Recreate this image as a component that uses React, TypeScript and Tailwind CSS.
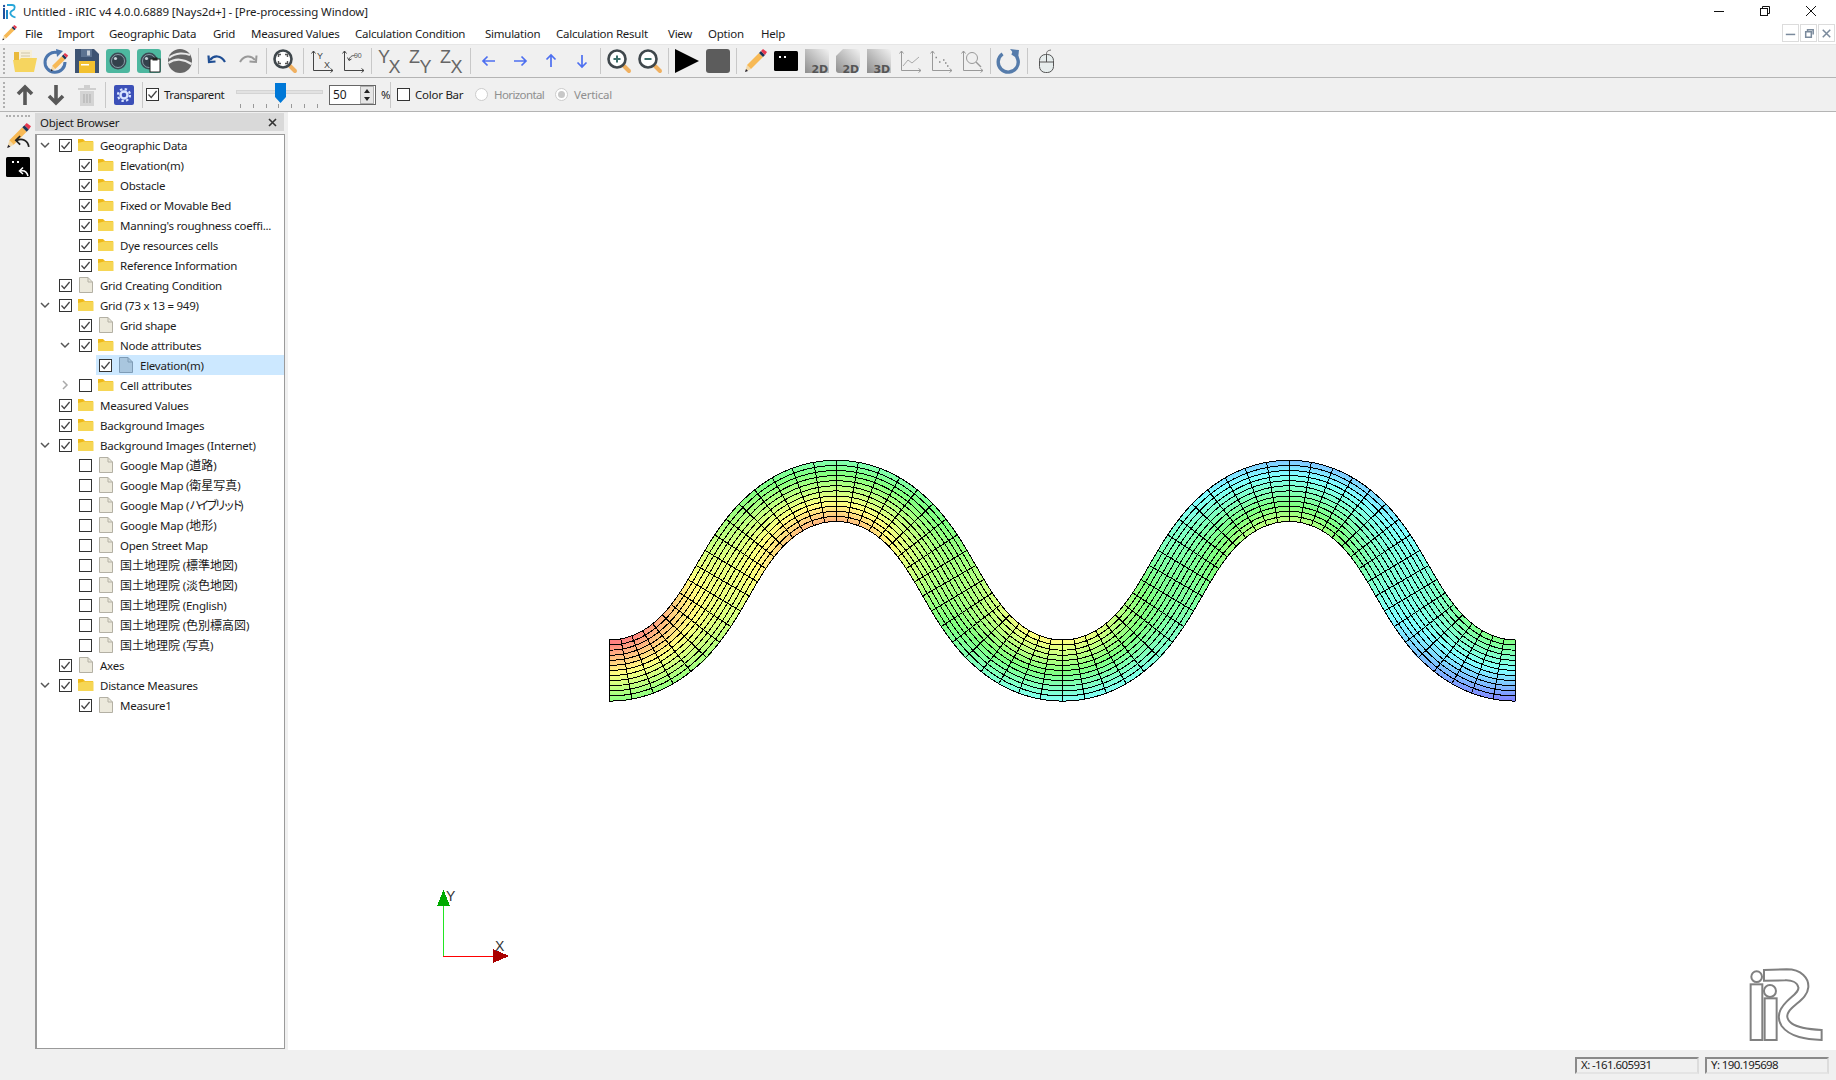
import React, { useMemo } from "react";

const FONT = "font-['Noto_Sans','Noto_Sans_CJK_JP',sans-serif]";

/* ---------- mesh ---------- */
function hsvToWhiteBlend(v: number) {
  const c = Math.max(0, Math.min(1, v));
  const h = 240 * (1 - c);
  const x = 1 - Math.abs(((h / 60) % 2) - 1);
  let r = 0, g = 0, b = 0;
  if (h < 60) [r, g, b] = [1, x, 0];
  else if (h < 120) [r, g, b] = [x, 1, 0];
  else if (h < 180) [r, g, b] = [0, 1, x];
  else [r, g, b] = [0, x, 1];
  const m = (q: number) => Math.round(127.5 + 127.5 * q);
  return `rgb(${m(r)},${m(g)},${m(b)})`;
}

function halfWave(tm: number) {
  let dx = 0, dy = 0;
  const n = 2000;
  for (let k = 0; k < n; k++) {
    const th = tm * Math.sin((Math.PI * (k + 0.5)) / n);
    dx += Math.cos(th) / n;
    dy += Math.sin(th) / n;
  }
  return { dx, dy };
}

function buildMesh() {
  const X0 = 609.5, Y0 = 670.5, HX = 226.5, HY = 179.6, HALF_W = 30.6;
  let lo = 0.1, hi = 1.5;
  for (let k = 0; k < 50; k++) {
    const mid = (lo + hi) / 2;
    const w = halfWave(mid);
    if (w.dy / w.dx < HY / HX) lo = mid;
    else hi = mid;
  }
  const tm = (lo + hi) / 2;
  const halfL = HX / halfWave(tm).dx;
  const SUBI = 3, SUBJ = 2, CI = 72, CJ = 12;
  const ni = CI * SUBI;
  const total = halfL * 4;
  const ds = total / ni;
  const cx: number[] = [], cy: number[] = [], ang: number[] = [];
  let px = X0, py = Y0;
  for (let i = 0; i <= ni; i++) {
    const s = i * ds;
    const th = tm * Math.sin((Math.PI * s) / halfL);
    cx.push(px); cy.push(py); ang.push(th);
    const steps = 20;
    for (let q = 0; q < steps; q++) {
      const sm = s + ((q + 0.5) * ds) / steps;
      const t2 = tm * Math.sin((Math.PI * sm) / halfL);
      px += (Math.cos(t2) * ds) / steps;
      py -= (Math.sin(t2) * ds) / steps;
    }
  }
  const pt = (i: number, j: number): [number, number] => {
    const n = HALF_W * (1 - j / (CJ * SUBJ / 2));
    return [cx[i] - Math.sin(ang[i]) * n, cy[i] - Math.cos(ang[i]) * n];
  };
  const val = (i: number, j: number) => {
    const t = i / ni;
    const n = 1 - j / (CJ * SUBJ / 2);
    return 0.78 - 0.53 * t + 0.25 * n * Math.cos((Math.PI * i * ds) / halfL);
  };
  const polys: { p: string; c: string }[] = [];
  for (let i = 0; i < ni; i++) {
    for (let j = 0; j < CJ * SUBJ; j++) {
      const a = pt(i, j), b = pt(i + 1, j), c = pt(i + 1, j + 1), d = pt(i, j + 1);
      polys.push({
        p: [a, b, c, d].map((q) => `${q[0].toFixed(1)},${q[1].toFixed(1)}`).join(" "),
        c: hsvToWhiteBlend(val(i + 0.5, j + 0.5)),
      });
    }
  }
  let lines = "";
  for (let i = 0; i <= CI; i++) {
    const a = pt(i * SUBI, 0), b = pt(i * SUBI, CJ * SUBJ);
    lines += `M${a[0].toFixed(1)} ${a[1].toFixed(1)}L${b[0].toFixed(1)} ${b[1].toFixed(1)}`;
  }
  for (let j = 0; j <= CJ; j++) {
    for (let i = 0; i <= ni; i++) {
      const a = pt(i, j * SUBJ);
      lines += `${i === 0 ? "M" : "L"}${a[0].toFixed(1)} ${a[1].toFixed(1)}`;
    }
  }
  return { polys, lines };
}

function Canvas() {
  const mesh = useMemo(buildMesh, []);
  return (
    <svg className="block" width={1548} height={938} viewBox="288 112 1548 938">
      <g shapeRendering="crispEdges">
        {mesh.polys.map((q, i) => (
          <polygon key={i} points={q.p} fill={q.c} stroke={q.c} strokeWidth={0.6} />
        ))}
        <path d={mesh.lines} fill="none" stroke="#000" strokeWidth={1} />
      </g>
      <g shapeRendering="crispEdges">
        <line x1={443.5} y1={906} x2={443.5} y2={956} stroke="#22e622" />
        <line x1={443} y1={956.5} x2={494} y2={956.5} stroke="#ff0000" />
        <polygon points="443.5,890 450,906 437,906" fill="#00aa00" />
        <polygon points="509,956 493,949 493,963" fill="#aa0000" />
      </g>
      <text x={446} y={901} fontSize={14} fill="#333" fontFamily="'Liberation Sans',sans-serif">Y</text>
      <text x={495} y={951} fontSize={14} fill="#333" fontFamily="'Liberation Sans',sans-serif">X</text>
      <g transform="translate(1560 950) scale(0.3333)" fill="#fff" stroke="#808080" strokeWidth={6}>
        <rect x={572} y={103} width={35} height={167} />
        <circle cx={590} cy={80} r={16} />
        <rect x={614} y={145} width={36} height={125} />
        <circle cx={630} cy={123} r={18} />
        <path d="M612 60 L680 58 C725 58 747 85 745 112 C743 140 715 155 695 175 C680 190 675 205 695 220 C715 235 750 238 785 240 L785 270 C740 268 690 262 665 228 C650 205 655 180 680 155 C700 135 718 125 715 112 C712 97 695 90 675 91 L612 92 Z" />
      </g>
    </svg>
  );
}

/* ---------- toolbar icons ---------- */
const I = ({ children }: { children: React.ReactNode }) => (
  <svg className="block shrink-0 overflow-visible" width={24} height={24} viewBox="0 0 24 24">{children}</svg>
);
const Pencil = () => (
  <g>
    <polygon points="2,23 4,16 8,20" fill="#f3d9a8" />
    <polygon points="2,23 3,20 5,22" fill="#223" />
    <polygon points="4,16 16,4 20,8 8,20" fill="#f7b955" />
    <polygon points="16,4 18,2 22,6 20,8" fill="#1d3557" />
    <polygon points="18,2 20,0 24,3 22,6" fill="#e63950" />
  </g>
);
const OpenFolder = () => (
  <I>
    <path d="M1 3h7l2 2h8v8H1z" fill="#e9b93c" />
    <rect x={6} y={1} width={13} height={13} fill="#f6efd9" />
    <path d="M8 4h9M8 7h9M8 10h9" stroke="#cfc6a8" />
    <path d="M0 11h6l2-2h16l-3 14H2z" fill="#f6d55f" />
  </I>
);
const RefreshPencil = () => (
  <I>
    <path d="M13 3.5A10 10 0 1 0 21 13" fill="none" stroke="#4c76ad" strokeWidth={3} />
    <polygon points="12,0 19,2 13,8" fill="#4c76ad" />
    <g transform="translate(5 4) scale(0.8)"><Pencil /></g>
  </I>
);
const Save = () => (
  <I>
    <path d="M0 0h19l5 5v19H0z" fill="#3d5372" />
    <rect x={6} y={0} width={11} height={8} fill="#5c7391" />
    <rect x={12} y={1.5} width={3} height={5} fill="#c7d0da" />
    <rect x={4} y={12} width={16} height={12} fill="#f3c130" />
    <rect x={6} y={15} width={8} height={1.5} fill="#fff" />
  </I>
);
const Lens = () => (
  <g>
    <circle cx={12} cy={12} r={8.5} fill="#3c4b56" />
    <circle cx={12} cy={12} r={6.5} fill="#33414c" stroke="#9fb3bd" strokeWidth={0.8} />
    <circle cx={9.5} cy={9.5} r={1.6} fill="#c8d4da" />
  </g>
);
const Camera = () => (
  <I>
    <rect width={24} height={24} rx={3} fill="#4db79f" />
    <Lens />
  </I>
);
const CameraDoc = () => (
  <I>
    <rect width={24} height={24} rx={3} fill="#4db79f" />
    <Lens />
    <rect x={13} y={10} width={10} height={13} fill="#fff" stroke="#222" />
    <rect x={15.5} y={8.5} width={5} height={3} fill="#222" />
  </I>
);
const Earth = () => (
  <I>
    <circle cx={12} cy={12} r={12} fill="#666" />
    <path d="M1 9C8 3 17 4 22 6" fill="none" stroke="#e8e8e8" strokeWidth={2} />
    <path d="M0.5 14C7 9 16 10 23.5 15" fill="none" stroke="#e8e8e8" strokeWidth={2.2} />
  </I>
);
const Undo = ({ c }: { c: string }) => (
  <I>
    <path d="M5 11C9 6 16 6 20 13" fill="none" stroke={c} strokeWidth={2.2} />
    <path d="M3.5 6.5L4 13L10.5 12.5" fill="none" stroke={c} strokeWidth={2.2} />
  </I>
);
const Redo = () => (
  <I>
    <g transform="translate(24 0) scale(-1 1)">
      <path d="M5 11C9 6 16 6 20 13" fill="none" stroke="#999" strokeWidth={2} />
      <path d="M3.5 6.5L4 13L10.5 12.5" fill="none" stroke="#999" strokeWidth={2} />
    </g>
  </I>
);
const Mag = ({ children }: { children: React.ReactNode }) => (
  <I>
    <path d="M15 15L22 22" stroke="#f0b060" strokeWidth={4} strokeLinecap="round" />
    <circle cx={10} cy={10} r={8.5} fill="#fff" stroke="#3f474c" strokeWidth={2.6} />
    {children}
  </I>
);
const AxisBase = () => (
  <g fill="none" stroke="#444" strokeWidth={1}>
    <path d="M3.5 2V21.5H23" />
    <path d="M1.5 4.5L3.5 2L5.5 4.5M20.5 19.5L23 21.5L20.5 23.5" />
  </g>
);
const AxisYX = () => (
  <I>
    <AxisBase />
    <text x={7} y={9.5} fontSize={9} fill="#444" fontFamily="'Liberation Sans',sans-serif">Y</text>
    <text x={14} y={19} fontSize={9} fill="#444" fontFamily="'Liberation Sans',sans-serif">X</text>
  </I>
);
const Axis90 = () => (
  <I>
    <AxisBase />
    <path d="M8 11C9 7 12 6 14 7" fill="none" stroke="#444" />
    <path d="M6.5 8.5L8 11.5L10.5 10" fill="none" stroke="#444" />
    <text x={13} y={8.5} fontSize={7} fill="#555" fontFamily="'Liberation Sans',sans-serif">90</text>
  </I>
);
const Letters = ({ a, b }: { a: string; b: string }) => (
  <I>
    <text x={0} y={13.5} fontSize={18} fill="#666" fontFamily="'Liberation Sans',sans-serif">{a}</text>
    <text x={10.5} y={23.5} fontSize={18} fill="#666" fontFamily="'Liberation Sans',sans-serif">{b}</text>
  </I>
);
const Arrow = ({ rot }: { rot: number }) => (
  <I>
    <g transform={`rotate(${rot} 12 12)`}>
      <path d="M12 18V6M7.5 10.5L12 6L16.5 10.5" fill="none" stroke="#4d6ff0" strokeWidth={1.7} />
    </g>
  </I>
);
const ZoomPM = ({ plus }: { plus: boolean }) => (
  <Mag>
    <path d={plus ? "M6.5 10h7M10 6.5v7" : "M6.5 10h7"} stroke="#3b6e6a" strokeWidth={2} />
  </Mag>
);
const Fit = () => (
  <Mag>
    <path d="M5.5 8V5.5H8M12 5.5h2.5V8M14.5 12v2.5H12M8 14.5H5.5V12" fill="none" stroke="#555" strokeWidth={1.4} />
  </Mag>
);
const Console = () => (
  <I>
    <rect x={0} y={2} width={24} height={20} rx={1.5} fill="#000" />
    <rect x={5} y={7} width={2} height={2} fill="#fff" />
    <rect x={10} y={7} width={2} height={2} fill="#fff" />
  </I>
);
const Dim = ({ label, id, folded }: { label: string; id: string; folded?: boolean }) => (
  <I>
    <defs>
      <linearGradient id={id} x1="0" y1="1" x2="1" y2="0">
        <stop offset="0" stopColor="#8d8d8d" />
        <stop offset="1" stopColor="#f2f2f2" />
      </linearGradient>
    </defs>
    {folded ? <path d="M7 0H24V18L18 24H3Q0 24 0 21V7z" fill={`url(#${id})`} /> : <rect width={24} height={24} fill={`url(#${id})`} />}
    <text x={6.5} y={23.5} fontSize={11} fontWeight={700} fill="#555" fontFamily="'DejaVu Sans',sans-serif">{label}</text>
  </I>
);
const GraphBase = () => (
  <g fill="none" stroke="#999">
    <path d="M3.5 2V21.5H23M1.5 4.5L3.5 2L5.5 4.5M20.5 19.5L23 21.5L20.5 23.5" />
  </g>
);
const Graph = () => (
  <I><GraphBase /><path d="M5 17L10 11L14 14L21 8" fill="none" stroke="#aaa" /></I>
);
const Scatter = () => (
  <I>
    <GraphBase />
    <path d="M6.5 8.5h1.5M10 13h1.5M14 11h1.5M16 14h1.5M18 17h1.5" stroke="#888" strokeWidth={1.5} />
  </I>
);
const GraphZoom = () => (
  <I>
    <GraphBase />
    <circle cx={12} cy={9} r={5.5} fill="none" stroke="#999" />
    <path d="M16 13L21 18" stroke="#999" strokeWidth={1.4} />
  </I>
);
const Refresh = () => (
  <I>
    <path d="M15.5 4A10 10 0 1 1 6 4.5" fill="none" stroke="#567cab" strokeWidth={3.4} transform="rotate(-3 12 13)" />
    <polygon points="13,0 22,1 21,10" fill="#567cab" />
  </I>
);
const Mouse = () => (
  <I>
    <rect x={5.5} y={5.5} width={14} height={18} rx={6} fill="#e6eded" stroke="#555" />
    <path d="M5.5 13H19.5M12.5 6V13" stroke="#555" fill="none" />
    <path d="M12.5 5C12.5 2 14 1.5 17 1" stroke="#777" fill="none" />
  </I>
);
const Sep = () => <div className="w-px h-[26px] -mx-px bg-[#c8c8c8] shrink-0" />;
const Grip = () => <div className="w-[2px] h-[26px] border-l-2 border-dotted border-[#b0b0b0] mr-[8px] shrink-0" />;

/* ---------- small widgets ---------- */
const Check = ({ on }: { on: boolean }) => (
  <svg className="block shrink-0" width={13} height={13} viewBox="0 0 13 13">
    <rect x={0.5} y={0.5} width={12} height={12} fill="#fff" stroke="#333" />
    {on && <path d="M2.5 6.5L5.2 9.4L10.6 3" fill="none" stroke="#444" strokeWidth={1.3} />}
  </svg>
);
const Folder = () => (
  <svg className="block shrink-0" width={16} height={16} viewBox="0 0 16 16">
    <path d="M0 2h5l2 2h8v3H0z" fill="#f0b917" />
    <path d="M0 6l6-1.5h9.5V14H0z" fill="#f6d655" />
  </svg>
);
const Doc = ({ sel }: { sel?: boolean }) => (
  <svg className="block shrink-0" width={16} height={16} viewBox="0 0 16 16">
    <path
      d="M1.5 0.5H10L14.5 5V15.5H1.5z"
      fill={sel ? "#a9c6de" : "#ece9dc"}
      stroke={sel ? "#7f9cb6" : "#b3b0a4"}
    />
    <path d="M10 0.5V5H14.5" fill="none" stroke={sel ? "#7f9cb6" : "#b3b0a4"} />
  </svg>
);
const Chevron = ({ open }: { open: boolean }) => (
  <svg className="block ml-[3px]" width={10} height={10} viewBox="0 0 10 10">
    <path d={open ? "M1 3L5 7L9 3" : "M3 1L7 5L3 9"} fill="none" stroke={open ? "#555" : "#aaa"} strokeWidth={1.5} />
  </svg>
);

/* CJK runs are a size up and katakana is set narrow, as in the reference */
const Label = ({ t }: { t: string }) => (
  <span className="ml-[6px] pt-px whitespace-nowrap tracking-[-0.25px]">
    {t.split(/([\u30a0-\u30ff]+|[\u4e00-\u9fff]+)/).map((p, i) =>
      /[\u30a0-\u30ff]/.test(p) ? (
        <span key={i} className="text-[12px] tracking-[-3.5px]">{p}</span>
      ) : /[\u4e00-\u9fff]/.test(p) ? (
        <span key={i} className="text-[12px] tracking-normal">{p}</span>
      ) : (
        <span key={i}>{p}</span>
      )
    )}
  </span>
);

type Row = { l: number; t: string; k: "f" | "d"; c: boolean; ch?: "o" | "c"; sel?: boolean };
const rows: Row[] = [
  { l: 0, t: "Geographic Data", k: "f", c: true, ch: "o" },
  { l: 1, t: "Elevation(m)", k: "f", c: true },
  { l: 1, t: "Obstacle", k: "f", c: true },
  { l: 1, t: "Fixed or Movable Bed", k: "f", c: true },
  { l: 1, t: "Manning's roughness coeffi...", k: "f", c: true },
  { l: 1, t: "Dye resources cells", k: "f", c: true },
  { l: 1, t: "Reference Information", k: "f", c: true },
  { l: 0, t: "Grid Creating Condition", k: "d", c: true },
  { l: 0, t: "Grid (73 x 13 = 949)", k: "f", c: true, ch: "o" },
  { l: 1, t: "Grid shape", k: "d", c: true },
  { l: 1, t: "Node attributes", k: "f", c: true, ch: "o" },
  { l: 2, t: "Elevation(m)", k: "d", c: true, sel: true },
  { l: 1, t: "Cell attributes", k: "f", c: false, ch: "c" },
  { l: 0, t: "Measured Values", k: "f", c: true },
  { l: 0, t: "Background Images", k: "f", c: true },
  { l: 0, t: "Background Images (Internet)", k: "f", c: true, ch: "o" },
  { l: 1, t: "Google Map (道路)", k: "d", c: false },
  { l: 1, t: "Google Map (衛星写真)", k: "d", c: false },
  { l: 1, t: "Google Map (ハイブリッド)", k: "d", c: false },
  { l: 1, t: "Google Map (地形)", k: "d", c: false },
  { l: 1, t: "Open Street Map", k: "d", c: false },
  { l: 1, t: "国土地理院 (標準地図)", k: "d", c: false },
  { l: 1, t: "国土地理院 (淡色地図)", k: "d", c: false },
  { l: 1, t: "国土地理院 (English)", k: "d", c: false },
  { l: 1, t: "国土地理院 (色別標高図)", k: "d", c: false },
  { l: 1, t: "国土地理院 (写真)", k: "d", c: false },
  { l: 0, t: "Axes", k: "d", c: true },
  { l: 0, t: "Distance Measures", k: "f", c: true, ch: "o" },
  { l: 1, t: "Measure1", k: "d", c: true },
];

const TreeRow = ({ r }: { r: Row }) => {
  const content = (
    <>
      <Check on={r.c} />
      <div className="ml-[6px]">{r.k === "f" ? <Folder /> : <Doc sel={r.sel} />}</div>
      <Label t={r.t} />
    </>
  );
  const pad = r.l === 0 ? "pl-0" : r.l === 1 ? "pl-[20px]" : "pl-[40px]";
  if (r.sel) {
    return (
      <div className={`h-5 flex items-center ${pad}`}>
        <div className="w-[19px] shrink-0" />
        <div className="h-5 flex-1 flex items-center pl-[3px] bg-[#cce8ff]">{content}</div>
      </div>
    );
  }
  return (
    <div className={`h-5 flex items-center ${pad}`}>
      <div className="w-[22px] shrink-0">{r.ch && <Chevron open={r.ch === "o"} />}</div>
      {content}
    </div>
  );
};

const menus: [string, string][] = [
  ["File", "w-[33px]"],
  ["Import", "w-[51px]"],
  ["Geographic Data", "w-[104px]"],
  ["Grid", "w-[38px]"],
  ["Measured Values", "w-[104px]"],
  ["Calculation Condition", "w-[130px]"],
  ["Simulation", "w-[71px]"],
  ["Calculation Result", "w-[112px]"],
  ["View", "w-[40px]"],
  ["Option", "w-[53px]"],
  ["Help", "w-[40px]"],
];

const Ticks = () => (
  <div className="flex justify-between w-[78px] ml-[4px]">
    {[0, 1, 2, 3, 4, 5, 6].map((i) => (
      <div key={i} className="w-px h-[4px] bg-[#999]" />
    ))}
  </div>
);

export default function App() {
  return (
    <div className={`w-[1836px] h-[1080px] flex flex-col overflow-hidden bg-white text-[11.5px] tracking-[-0.25px] text-[#1c1c1c] ${FONT}`}>
      {/* title bar */}
      <div className="h-[22px] flex items-center shrink-0 relative">
        <svg className="ml-[3px] mr-[7px] block" width={13} height={15} viewBox="0 0 13 15">
          <rect x={0} y={4} width={2} height={11} fill="#1e4f9c" />
          <circle cx={1} cy={2} r={1.2} fill="#1e4f9c" />
          <rect x={3} y={6} width={2} height={9} fill="#1e88c7" />
          <path d="M4 1H9C12.5 1 12.5 5 9.5 6.5C6.5 8 6 11.5 12.5 13.5" fill="none" stroke="#27a6d9" strokeWidth={1.8} />
        </svg>
        <span className="pt-[2px] tracking-[-0.07px]">Untitled - iRIC v4 4.0.0.6889 [Nays2d+] - [Pre-processing Window]</span>
        <div className="ml-auto flex items-center text-black">
          <svg className="block mr-[36px]" width={10} height={10} viewBox="0 0 10 10"><path d="M0 5.5H10" stroke="#111" /></svg>
          <svg className="block mr-[36px]" width={10} height={10} viewBox="0 0 10 10">
            <rect x={0.5} y={2.5} width={7} height={7} fill="none" stroke="#111" />
            <path d="M2.5 2.5V0.5H9.5V7.5H7.5" fill="none" stroke="#111" />
          </svg>
          <svg className="block mr-[20px]" width={10} height={10} viewBox="0 0 10 10"><path d="M0 0L10 10M10 0L0 10" stroke="#111" /></svg>
        </div>
      </div>
      {/* menu bar */}
      <div className="h-[22px] flex items-center shrink-0 relative">
        <svg className="block ml-[1px] mr-[8px]" width={16} height={16} viewBox="0 0 24 24"><Pencil /></svg>
        {menus.map(([m, w]) => (
          <div key={m} className={`${w} pt-px whitespace-nowrap`}>{m}</div>
        ))}
        <div className="ml-auto mr-px flex gap-px">
          {["M3 9h10", "M5 6h6v6H5zM7 6V4h6v5", "M4 4L12 12M12 4L4 12"].map((d) => (
            <div key={d} className="w-[17px] h-[18px] border border-[#dcdcdc] flex items-center justify-center">
              <svg className="block" width={15} height={15} viewBox="0 0 16 16">
                <path d={d} fill="none" stroke="#7a8a9c" strokeWidth={d.length > 20 && d[1] === "4" ? 2.4 : 1.6} />
              </svg>
            </div>
          ))}
        </div>
      </div>
      {/* toolbar 1 */}
      <div className="h-[34px] bg-[#f0f0f0] border-y border-t-[#e6e6e6] border-b-[#b4b4b4] flex items-center pl-[3px] gap-[7px] shrink-0">
        <div className="-mr-[7px]"><Grip /></div>
        <OpenFolder /><RefreshPencil /><Save /><Camera /><CameraDoc /><Earth />
        <Sep />
        <Undo c="#1f4e94" /><Redo />
        <Sep />
        <Fit />
        <Sep />
        <AxisYX /><Axis90 />
        <Sep />
        <Letters a="Y" b="X" /><Letters a="Z" b="Y" /><Letters a="Z" b="X" />
        <Sep />
        <Arrow rot={-90} /><Arrow rot={90} /><Arrow rot={0} /><Arrow rot={180} />
        <Sep />
        <ZoomPM plus /><ZoomPM plus={false} />
        <Sep />
        <I><polygon points="0,0 24,12 0,24" fill="#000" /></I>
        <I><rect width={24} height={24} rx={3} fill="#5c5c5c" /></I>
        <Sep />
        <I><Pencil /></I>
        <Console />
        <Dim id="d1" label="2D" />
        <Dim id="d2" label="2D" folded />
        <Dim id="d3" label="3D" />
        <Graph /><Scatter /><GraphZoom />
        <Sep />
        <Refresh />
        <Sep />
        <Mouse />
      </div>
      {/* toolbar 2 */}
      <div className="h-[34px] bg-[#f0f0f0] border-b border-[#b4b4b4] flex items-center pl-[3px] shrink-0">
        <Grip />
        <div className="flex items-center gap-[7px]">
          <I><path d="M12 22V4M5 11L12 4L19 11" fill="none" stroke="#585858" strokeWidth={3.6} /></I>
          <I><path d="M12 2V20M5 13L12 20L19 13" fill="none" stroke="#585858" strokeWidth={3.6} /></I>
          <I>
            <path d="M3 5H21V7H3zM9 2H15V5H9z" fill="#cfcfcf" />
            <path d="M5 8H19V23H5z" fill="#d4d4d4" />
            <path d="M9 11V20M12 11V20M15 11V20" stroke="#b5b5b5" strokeWidth={1.3} />
          </I>
          <Sep />
          <I>
            <rect x={2} y={2} width={20} height={20} rx={2} fill="#3c50b8" />
            <circle cx={12} cy={12} r={3.5} fill="none" stroke="#d8e4ff" strokeWidth={2.4} />
            <circle cx={12} cy={12} r={6} fill="none" stroke="#d8e4ff" strokeWidth={2.2} strokeDasharray="2.4 2.3" />
          </I>
          <Sep />
        </div>
        <div className="ml-[4px]"><Check on /></div>
        <span className="ml-[5px] w-[72px] whitespace-nowrap tracking-[-0.45px]">Transparent</span>
        <div className="relative w-[87px] h-[28px] flex flex-col justify-end">
          <div className="absolute left-0 right-0 top-[9px] h-[4px] bg-[#e2e2e2] border border-[#d4d4d4]" />
          <svg className="absolute left-[39px] top-[2px] block" width={11} height={20} viewBox="0 0 11 20">
            <path d="M0 0H11V14L5.5 20L0 14z" fill="#0078d7" />
          </svg>
          <div className="mb-px"><Ticks /></div>
        </div>
        <div className="ml-[6px] w-[47px] h-[20px] bg-white border border-[#666] flex items-center pl-[3px] pr-px">
          <span className="flex-1 text-[12px] tracking-normal">50</span>
          <div className="w-[14px] h-[18px] flex flex-col bg-[#e6e6e6] border border-[#b0b0b0]">
            <svg className="block flex-1" viewBox="0 0 12 8"><path d="M3 6L6 2L9 6z" fill="#222" /></svg>
            <svg className="block flex-1" viewBox="0 0 12 8"><path d="M3 2L6 6L9 2z" fill="#222" /></svg>
          </div>
        </div>
        <span className="ml-[5px] w-[9px]">%</span>
        <div className="w-px h-[26px] bg-[#c8c8c8] ml-0" />
        <div className="ml-[6px]"><Check on={false} /></div>
        <span className="ml-[5px] w-[60px] whitespace-nowrap">Color Bar</span>
        <div className="w-[13px] h-[13px] rounded-full bg-white border border-[#cccccc]" />
        <span className="ml-[6px] w-[61px] whitespace-nowrap tracking-[-0.6px] text-[#8f8f8f]">Horizontal</span>
        <div className="w-[13px] h-[13px] rounded-full bg-white border border-[#cccccc] flex items-center justify-center">
          <div className="w-[7px] h-[7px] rounded-full bg-[#c8c8c8]" />
        </div>
        <span className="ml-[6px] whitespace-nowrap text-[#8f8f8f]">Vertical</span>
      </div>
      {/* main */}
      <div className="flex-1 min-h-0 flex">
        <div className="w-[35px] bg-[#f0f0f0] shrink-0 flex flex-col items-center pt-[3px]">
          <div className="w-[24px] h-[2px] border-t-2 border-dotted border-[#b0b0b0]" />
          <svg className="block mt-[6px]" width={26} height={26} viewBox="0 0 24 24">
            <Pencil />
            <path d="M22 22C21 16 16 14 11 16" fill="none" stroke="#222" strokeWidth={1.6} />
            <path d="M14 12L10 16L14 20" fill="none" stroke="#222" strokeWidth={1.6} />
          </svg>
          <svg className="block mt-[8px]" width={24} height={22} viewBox="0 0 24 22">
            <rect width={24} height={20} rx={1.5} fill="#000" />
            <rect x={6} y={4} width={2} height={2} fill="#fff" />
            <rect x={11} y={4} width={2} height={2} fill="#fff" />
            <path d="M22 19C21 15 18 13 14 14" fill="none" stroke="#fff" strokeWidth={1.5} />
            <path d="M17 10.5L13.5 14L17 17" fill="none" stroke="#fff" strokeWidth={1.5} />
          </svg>
        </div>
        <div className="w-[250px] shrink-0 bg-[#f0f0f0] flex flex-col pt-px pb-px">
          <div className="h-[18px] bg-[#d9d9d9] flex items-center justify-between pl-[5px] pr-[7px] mr-px mb-[3px]">
            <span className="pt-[2px]">Object Browser</span>
            <svg className="block" width={9} height={9} viewBox="0 0 9 9"><path d="M1 1L8 8M8 1L1 8" stroke="#333" strokeWidth={1.6} /></svg>
          </div>
          <div className="flex-1 bg-white border-l-2 border-t border-r border-b border-[#9a9a9a]">
            {rows.map((r, i) => (
              <TreeRow key={i} r={r} />
            ))}
          </div>
        </div>
        <div className="w-[3px] bg-[#f0f0f0] shrink-0" />
        <div className="flex-1 min-w-0 bg-white"><Canvas /></div>
      </div>
      {/* status bar */}
      <div className="h-[30px] bg-[#f0f0f0] flex items-center justify-end gap-[6px] pr-[7px] shrink-0 tracking-[-0.6px]">
        <div className="w-[124px] h-[17px] flex items-center pl-[4px] border-2 border-t-[#8a8a8a] border-l-[#8a8a8a] border-r-[#dcdcdc] border-b-[#e4e4e4]">X: -161.605931</div>
        <div className="w-[124px] h-[17px] flex items-center pl-[4px] border-2 border-t-[#8a8a8a] border-l-[#8a8a8a] border-r-[#dcdcdc] border-b-[#e4e4e4]">Y: 190.195698</div>
      </div>
    </div>
  );
}
